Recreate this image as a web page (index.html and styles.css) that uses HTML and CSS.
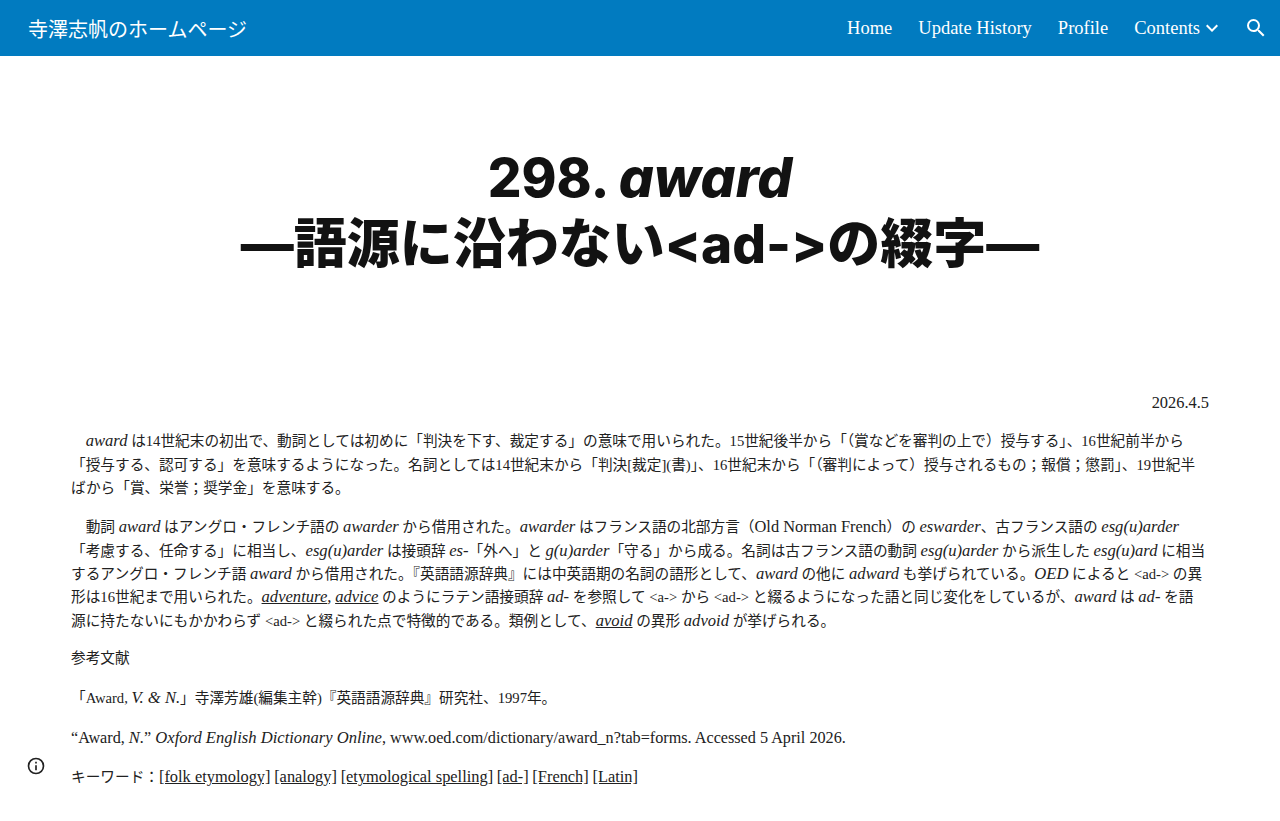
FILE: index.html
```html
<!DOCTYPE html>
<html lang="ja">
<head>
  <meta charset="UTF-8">
  <title>298. award</title>
  <link rel="stylesheet" href="styles.css">
</head>
<body>
  <header class="topbar">
    <a class="site-name" href="#">寺澤志帆のホームページ</a>
    <nav class="nav">
      <a href="#">Home</a>
      <a href="#">Update History</a>
      <a href="#">Profile</a>
      <a class="has-menu" href="#">Contents
        <svg width="24" height="24" viewBox="0 0 24 24" fill="#fff"><path d="M7.41 8.59 12 13.17l4.59-4.58L18 10l-6 6-6-6z"/></svg>
      </a>
      <button class="search" aria-label="Search">
        <svg width="24" height="24" viewBox="0 0 24 24" fill="#fff"><path d="M15.5 14h-.79l-.28-.27A6.47 6.47 0 0 0 16 9.5 6.5 6.5 0 1 0 9.5 16c1.61 0 3.09-.59 4.23-1.57l.27.28v.79l5 4.99L20.49 19l-4.99-5zm-6 0C7.01 14 5 11.99 5 9.5S7.01 5 9.5 5 14 7.01 14 9.5 11.99 14 9.5 14z"/></svg>
      </button>
    </nav>
  </header>

  <section class="hero">
    <h1>298. <em>award</em><br>—語源に沿わない&lt;ad-&gt;の綴字—</h1>
  </section>

  <main class="content">
    <p class="date"><span class="lat">2026.4.5</span></p>
    <p>&emsp;<em>award</em> は14世紀末の初出で、動詞としては初めに「判決を下す、裁定する」の意味で用いられた。15世紀後半から「（賞などを審判の上で）授与する」、16世紀前半から<br>「授与する、認可する」を意味するようになった。名詞としては14世紀末から「判決[裁定](書)」、16世紀末から「（審判によって）授与されるもの；報償；懲罰」、19世紀半<br>ばから「賞、栄誉；奨学金」を意味する。</p>
    <p>&emsp;動詞 <em>award</em> はアングロ・フレンチ語の <em>awarder</em> から借用された。<em>awarder</em> はフランス語の北部方言（<span class="lat">Old Norman French</span>）の <em>eswarder</em>、古フランス語の <em>esg(u)arder</em><br>「考慮する、任命する」に相当し、<em>esg(u)arder</em> は接頭辞 <em>es-</em>「外へ」と <em>g(u)arder</em>「守る」から成る。名詞は古フランス語の動詞 <em>esg(u)arder</em> から派生した <em>esg(u)ard</em> に相当<br>するアングロ・フレンチ語 <em>award</em> から借用された。『英語語源辞典』には中英語期の名詞の語形として、<em>award</em> の他に <em>adward</em> も挙げられている。<em>OED</em> によると &lt;ad-&gt; の異<br>形は16世紀まで用いられた。<a href="#"><em>adventure</em></a><em>,</em> <a href="#"><em>advice</em></a> のようにラテン語接頭辞 <em>ad-</em> を参照して &lt;a-&gt; から &lt;ad-&gt; と綴るようになった語と同じ変化をしているが、<em>award</em> は <em>ad-</em> を語<br>源に持たないにもかかわらず &lt;ad-&gt; と綴られた点で特徴的である。類例として、<a href="#"><em>avoid</em></a> の異形 <em>advoid</em> が挙げられる。</p>
    <p class="refs-head">参考文献</p>
    <p>「Award, <em>V. &amp; N.</em>」寺澤芳雄(編集主幹)『英語語源辞典』研究社、1997年。</p>
    <p class="lat">“Award, <em>N.</em>” <em>Oxford English Dictionary Online</em>, www.oed.com/dictionary/award_n?tab=forms. Accessed 5 April 2026.</p>
    <p>キーワード：<a href="#">[folk etymology]</a> <a href="#">[analogy]</a> <a href="#">[etymological spelling]</a> <a href="#">[ad-]</a> <a href="#">[French]</a> <a href="#">[Latin]</a></p>
  </main>

  <button class="info" aria-label="Site information">
    <svg width="20" height="20" viewBox="0 0 24 24" fill="#212121"><path d="M11 7h2v2h-2zm0 4h2v6h-2zm1-9a10 10 0 1 0 0 20 10 10 0 0 0 0-20zm0 18a8 8 0 1 1 0-16 8 8 0 0 1 0 16z"/></svg>
  </button>
</body>
</html>
```

FILE: styles.css
```css
html, body {
  margin: 0;
  height: 100%;
  overflow: hidden;
}
body {
  font-family: "Liberation Serif", "Noto Sans CJK JP", serif;
  background: #fff;
  color: #212121;
}
a {
  color: inherit;
}

.topbar {
  height: 56px;
  background: #017bc0;
  display: flex;
  align-items: center;
  justify-content: space-between;
  padding: 0 4px 0 28px;
}
.site-name {
  font-family: "Liberation Sans", "Noto Sans CJK JP", sans-serif;
  font-size: 20px;
  color: #fff;
  text-decoration: none;
}
.nav {
  display: flex;
  align-items: center;
  gap: 26px;
}
.nav a {
  font-size: 18.5px;
  color: #fff;
  text-decoration: none;
}
.has-menu {
  display: flex;
  align-items: center;
}
.search {
  background: none;
  border: 0;
  padding: 0;
  width: 24px;
  height: 24px;
  margin-right: 8px;
  margin-left: -6px;
}

.hero {
  height: 336px;
  padding-bottom: 28px;
  box-sizing: border-box;
  display: flex;
  align-items: center;
  justify-content: center;
}
h1 {
  margin: 0;
  font-family: "Inter", "Noto Sans CJK JP", sans-serif;
  font-size: 53px;
  font-weight: 800;
  line-height: 66px;
  text-align: center;
  color: #121212;
  font-variant-ligatures: none;
  font-feature-settings: "calt" 0;
}
h1 em {
  font-size: 55px;
}

.content {
  padding: 0 71px;
  font-size: 14.67px;
  line-height: 23.47px;
  white-space: nowrap;
}
.content p {
  margin: 0 0 15.2px;
}
.content .date {
  text-align: right;
  margin-bottom: 15px;
}
.content .refs-head {
  margin-top: -1.5px;
  margin-bottom: 16.7px;
}
/* latin runs sit a bit larger than the japanese around them */
.content a, .content .lat {
  font-size: 16.4px;
  line-height: 1;
}
.content em {
  font-size: 16.6px;
  line-height: 1;
}
.content p.lat {
  font-size: 16.2px;
  line-height: 23.47px;
  margin-top: 16px;
  margin-bottom: 16px;
}

.info {
  position: fixed;
  left: 26px;
  top: 756px;
  width: 20px;
  height: 20px;
  padding: 0;
  background: none;
  border: 0;
}
```
